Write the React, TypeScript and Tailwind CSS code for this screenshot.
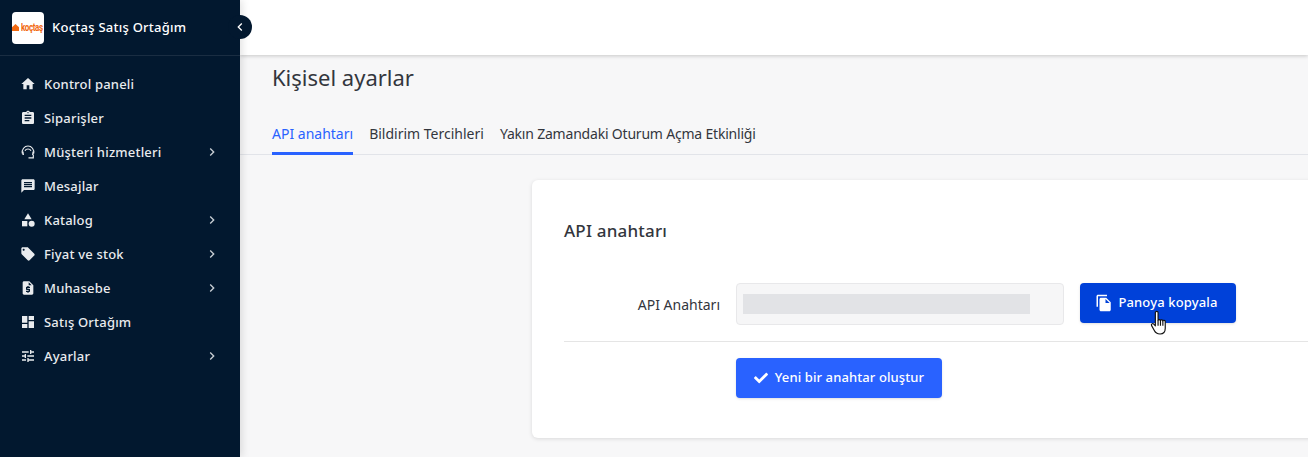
import { MdHome, MdAssignment, MdMessage, MdCategory, MdLocalOffer, MdRequestQuote, MdDashboard, MdTune, MdChevronRight, MdChevronLeft, MdFileCopy } from "react-icons/md";
import { FaCheck } from "react-icons/fa";
import type { ReactNode } from "react";

function SupportIcon() {
  return (
    <svg viewBox="0 0 16 16" className="h-4 w-4" fill="none" stroke="currentColor" strokeWidth="1.2">
      <path d="M2.300 9.500C1.600 5.500 4.400 2 8 2s6.400 3.500 5.700 7.500" />
      <path d="M2 7.500h1.500l.5 3.500H2.500zM14 7.500h-1.500l-.5 3.500h1.500z" fill="currentColor" stroke="none" />
      <path d="M5 6.800C5.600 5.600 6.700 5 8 5s2.400.6 3 1.800" />
      <path d="M13.300 11v2.800H8.500" />
    </svg>
  );
}

const iconClass = "h-4 w-4";

const menu: { label: string; icon: ReactNode; arrow?: boolean }[] = [
  { label: "Kontrol paneli", icon: <MdHome className={iconClass} /> },
  { label: "Siparişler", icon: <MdAssignment className={iconClass} /> },
  { label: "Müşteri hizmetleri", icon: <SupportIcon />, arrow: true },
  { label: "Mesajlar", icon: <MdMessage className={iconClass} /> },
  { label: "Katalog", icon: <MdCategory className={iconClass} />, arrow: true },
  { label: "Fiyat ve stok", icon: <MdLocalOffer className={iconClass} />, arrow: true },
  { label: "Muhasebe", icon: <MdRequestQuote className={iconClass} />, arrow: true },
  { label: "Satış Ortağım", icon: <MdDashboard className={iconClass} /> },
  { label: "Ayarlar", icon: <MdTune className={iconClass} />, arrow: true },
];

function HandCursor() {
  return (
    <svg viewBox="0 0 17 24" className="absolute left-[70px] top-[27px] h-[25px] w-[18px]" stroke="#111" strokeWidth="1.1" fill="#fff" strokeLinejoin="round">
      <path d="M5 2.500c0-1.600 2.600-1.600 2.600 0V10c0-1 2.300-1 2.300.2 0-1 2.300-1 2.300.3 .2-1 2.300-.8 2.300.6v6.400c0 3-1.500 5.500-5 5.500-3 0-4.500-1.200-5.500-3.300L1.400 15c-.8-1.500 1-2.500 2.100-1.400L5 15.200z" />
      <path d="M7.600 10v5M9.900 10.200v5M12.200 10.500v4.700" fill="none" />
    </svg>
  );
}

export default function App() {
  return (
    <div className="flex h-[457px] w-[1308px] overflow-hidden bg-[#f7f7f8] font-['Noto_Sans',sans-serif] text-[#33363d]">
      <aside className="relative z-20 w-[240px] shrink-0 bg-[#02182f] text-[#e9ebee] shadow-[2px_0_8px_rgba(0,0,0,0.12)]">
        <div className="flex h-[56px] items-center gap-2 border-b border-[#1a2d42] px-3">
          <div className="flex h-8 w-8 items-center rounded bg-white">
            <svg viewBox="0 0 7 7" className="h-[7px] w-[7px] shrink-0" fill="#f26a12">
              <path d="M3.500 0L7 3.200V7H0V3.200z" />
            </svg>
            <span className="ml-[2px] scale-y-[1.3] font-['Roboto',sans-serif] text-[8px] font-bold leading-none tracking-[-0.4px] text-[#f26a12]">koçtaş</span>
          </div>
          <span className="text-[13px] font-medium tracking-[0.25px] text-white">Koçtaş Satış Ortağım</span>
        </div>
        <button className="absolute left-[228px] top-[15px] flex h-6 w-6 items-center justify-center rounded-full bg-[#02182f] text-white">
          <MdChevronLeft className="h-4 w-4" />
        </button>
        <nav className="flex flex-col pt-[11px]">
          {menu.map((item) => (
            <div key={item.label} className="flex h-[34px] items-center pl-[20px] pr-[20px]">
              <span className="flex w-[24px] shrink-0">{item.icon}</span>
              <span className="flex-1 pt-[2px] text-[13px] font-medium tracking-[0.2px]">{item.label}</span>
              {item.arrow && <MdChevronRight className="h-4 w-4 text-[#c9ced4]" />}
            </div>
          ))}
        </nav>
      </aside>

      <div className="flex min-w-0 flex-1 flex-col">
        <header className="relative z-10 h-[55px] shrink-0 bg-white shadow-[0_1px_4px_rgba(0,0,0,0.2)]" />
        <main className="min-h-0 flex-1">
          <h1 className="px-[32px] pt-[8px] text-[22px] font-normal leading-[28px]">Kişisel ayarlar</h1>
          <div className="mt-[26px] flex h-[38px] gap-4 border-b border-[#e2e4e9] px-[32px] text-[14px] font-normal leading-[20px]">
            <div className="h-[38px] border-b-[3px] border-[#2962ff] pt-[7px] text-[#2962ff]">API anahtarı</div>
            <div className="pt-[7px]">Bildirim Tercihleri</div>
            <div className="pt-[7px] tracking-[-0.2px]">Yakın Zamandaki Oturum Açma Etkinliği</div>
          </div>
          <section className="ml-[292px] mt-[25px] h-[258px] w-[900px] rounded-md bg-white pl-[32px] pt-[38px] shadow-[0_1px_4px_rgba(0,0,0,0.12)]">
            <h2 className="text-[17px] font-medium leading-[26px] tracking-[0.2px]">API anahtarı</h2>
            <div className="mt-[39px] flex h-[59px] items-start border-b border-[#e5e5e5] pb-4">
              <label className="w-[156px] pt-[11px] text-right text-[14px]">API Anahtarı</label>
              <div className="ml-[16px] flex h-[42px] w-[328px] items-center rounded border border-[#e8e8ea] bg-[#f6f6f7] pl-[6px]">
                <div className="h-[20px] w-[287px] bg-[#e2e3e6]" />
              </div>
              <div className="relative ml-[16px]">
                <button className="flex h-[40px] w-[156px] items-center justify-center gap-[5px] rounded bg-[#0041d9] pr-[3px] text-[13px] font-medium tracking-[0.15px] text-white shadow-sm">
                  <MdFileCopy className="h-[18px] w-[18px]" />
                  Panoya kopyala
                </button>
                <HandCursor />
              </div>
            </div>
            <button className="ml-[172px] mt-4 flex h-[40px] w-[206px] items-center justify-center gap-[7px] rounded bg-[#2962ff] text-[13px] font-medium tracking-[0.1px] text-white shadow-sm">
              <FaCheck className="h-[14px] w-[14px]" />
              Yeni bir anahtar oluştur
            </button>
          </section>
        </main>
      </div>
    </div>
  );
}
